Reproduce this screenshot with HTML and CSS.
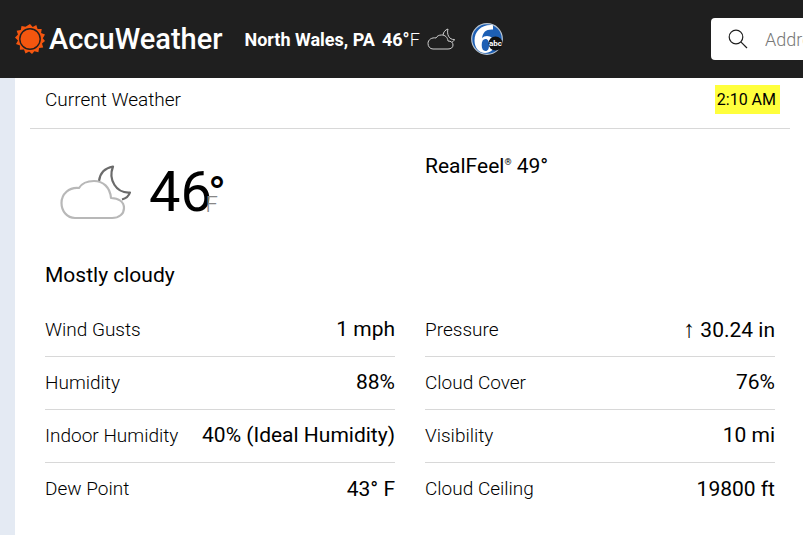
FILE: index.html
```html
<!DOCTYPE html>
<html lang="en">
<head>
    <meta charset="UTF-8">
    <meta name="viewport" content="width=device-width, initial-scale=1.0">
    <title>North Wales, PA Current Weather | AccuWeather</title>
    <link rel="stylesheet" href="styles.css">
</head>
<body>
    <header class="header">
        <a href="#" class="logo">
            <svg width="30" height="30" viewBox="0 0 30 30" aria-hidden="true">
                <path fill="#f4560f" d="M15 0l2.7 3.1L21.3 1l1.3 4 4.1-.1-.6 4.1 3.9 1.6-2.2 3.6L30 17l-3 2.6 1.2 3.9-4.1.6-.7 4.1-4-.9L17 30l-2.9-2.6-3.6 2-1.5-3.9-4.2.2.2-4.2L1 20l2-3.5L0 13.400l3-2.800L1.600 6.800l4.200-.8.7-4.100 4 .9z"/>
                <circle cx="15" cy="15" r="10.200" fill="#f4560f" stroke="#1f1f1f" stroke-width="1.400"/>
            </svg>
            <span>AccuWeather</span>
        </a>
        <a href="#" class="location">
            <span class="city">North Wales, PA</span>
            <span class="temp">46°<span class="unit">F</span></span>
            <svg width="28" height="22" viewBox="0 0 28 22" fill="none" stroke="#d0d0d0" stroke-width="1" aria-hidden="true">
                <path d="M6 21h15c3 0 5-1.500 5-4 0-2.500-2-4-5-4-.5-4-3-6-6.500-6-2.500 0-4.500 1-5.500 3-4-.8-8 1.500-8 5.500 0 3 2 5.500 5 5.500z"/>
                <path d="M16 7c.5-3 2-5 5-6-1.500 5 1 11 6.500 10.500-.5 1.500-1.500 2-2.500 2.500"/>
            </svg>
        </a>
        <a href="#" class="station" aria-label="6abc">
            <svg width="32" height="32" viewBox="0 0 32 32">
                <circle cx="16" cy="16" r="15.300" fill="#1d5fb4" stroke="#b9c5d2" stroke-width="1.200"/>
                <path fill="#fff" d="M22 2.200C11 1 3.500 8 3.500 17.500 3.500 25 8 30 14 30c5.500 0 9.500-3.500 9.500-9 0-5-3.500-8-7.500-8-2.200 0-3.800.8-4.800 2.200C11.500 9.500 15 6 22 6.500z"/>
                <path fill="#1d5fb4" d="M14.500 16c2.500 0 3.500 2.200 3.500 6s-1 6-3.500 6-3.800-2.200-3.800-6 1.300-6 3.800-6z"/>
                <circle cx="24.500" cy="20.500" r="7" fill="#111"/>
                <text x="24.500" y="23" class="abc">abc</text>
            </svg>
        </a>
        <form class="search">
            <svg width="20" height="20" viewBox="0 0 20 20" fill="none" stroke="#1f1f1f" stroke-width="1.200" aria-hidden="true">
                <circle cx="8" cy="8" r="6.800"/>
                <path d="M12.800 12.800L19 19"/>
            </svg>
            <input type="text" placeholder="Address, City or Zip Code" aria-label="Search location">
        </form>
    </header>

    <main class="card">
        <div class="card-header">
            <h1>Current Weather</h1>
            <span class="time">2:10 AM</span>
        </div>
        <div class="card-content">
            <div class="summary">
                <div class="current">
                    <svg width="72" height="56" viewBox="0 0 72 56" fill="none" stroke-width="2.200" stroke-linejoin="round" aria-hidden="true">
                        <path stroke="#6b6b6b" d="M39 16C40 8 45 3 53 1.500c-5 13 3 27 17 26-1 3-4 6-8 7"/>
                        <path stroke="#b8b8b8" d="M15 53h37c7 0 12-4 12-10s-5-10-13-10c-1-11-8-17-17-17-7 0-12 2-15 7C9 22 1.500 29 1.500 38 1.500 46 7 53 15 53z"/>
                    </svg>
                    <div class="big-temp">46<span class="degree">°</span><span class="unit">F</span></div>
                </div>
                <div class="realfeel">RealFeel<sup>®</sup> 49°</div>
            </div>
            <p class="phrase">Mostly cloudy</p>
            <div class="details">
                <dl>
                    <div class="row"><dt>Wind Gusts</dt><dd>1 mph</dd></div>
                    <div class="row"><dt>Humidity</dt><dd>88%</dd></div>
                    <div class="row"><dt>Indoor Humidity</dt><dd>40% (Ideal Humidity)</dd></div>
                    <div class="row"><dt>Dew Point</dt><dd>43° F</dd></div>
                </dl>
                <dl>
                    <div class="row"><dt>Pressure</dt><dd><span class="arrow">↑</span> 30.24 in</dd></div>
                    <div class="row"><dt>Cloud Cover</dt><dd>76%</dd></div>
                    <div class="row"><dt>Visibility</dt><dd>10 mi</dd></div>
                    <div class="row"><dt>Cloud Ceiling</dt><dd>19800 ft</dd></div>
                </dl>
            </div>
        </div>
    </main>
</body>
</html>
```
FILE: styles.css
```css
* {
    box-sizing: border-box;
}
body {
    margin: 0;
    background: #e4eaf3;
    color: #000;
    font-family: Roboto, "Liberation Sans", sans-serif;
    font-size: 18px;
}
a {
    color: inherit;
    text-decoration: none;
}
.header {
    display: flex;
    align-items: center;
    height: 78px;
    padding-left: 15px;
    background: #1f1f1f;
    color: #fff;
}
.logo {
    display: flex;
    align-items: center;
    gap: 4px;
    font-size: 29px;
    font-weight: 500;
}
.location {
    display: flex;
    align-items: center;
    gap: 7px;
    margin-left: 22px;
    font-size: 18px;
    font-weight: 700;
    white-space: nowrap;
}
.location .unit {
    font-weight: 300;
}
.station {
    display: flex;
    margin-left: 16px;
}
.abc {
    fill: #fff;
    font-size: 8px;
    font-weight: 700;
    text-anchor: middle;
}
.search {
    display: flex;
    align-items: center;
    gap: 17px;
    width: 92px;
    height: 42px;
    margin-left: auto;
    padding-left: 17px;
    border-radius: 4px 0 0 4px;
    background: #fff;
}
.search svg {
    flex-shrink: 0;
}
.search input {
    flex: 1;
    min-width: 0;
    padding: 0;
    border: none;
    outline: none;
    background: none;
    font: 300 18px Roboto, "Liberation Sans", sans-serif;
}
.search input::placeholder {
    color: #777;
}
.card {
    margin-left: 15px;
    padding: 0 13px 20px 15px;
    background: #fff;
}
.card-header {
    display: flex;
    align-items: center;
    justify-content: space-between;
    height: 51px;
    padding: 0 10px 8px 15px;
    border-bottom: 1px solid #d8d8d8;
}
.card-header h1 {
    margin: 0;
    font-size: 19px;
    font-weight: 300;
}
.time {
    padding: 0 4px 0 2px;
    background: #ffff3c;
    font-size: 16px;
    line-height: 29px;
}
.card-content {
    padding: 0 15px;
}
.summary,
.details {
    display: grid;
    grid-template-columns: 1fr 1fr;
    column-gap: 30px;
}
.summary {
    padding-top: 24px;
}
.current {
    display: flex;
    align-items: center;
    gap: 17px;
    height: 80px;
    padding-left: 15px;
}
.big-temp {
    position: relative;
    font-size: 56px;
    line-height: 64px;
}
.big-temp .degree {
    margin-left: -4px;
    font-size: 48px;
}
.big-temp .unit {
    position: absolute;
    right: 8px;
    bottom: 10px;
    color: #878787;
    font-size: 22px;
    font-weight: 300;
    line-height: 24px;
}
.realfeel {
    font-size: 21px;
    line-height: 26px;
}
.realfeel sup {
    font-size: 9px;
    line-height: 0;
}
.phrase {
    margin: 28px 0 15px;
    font-size: 21px;
    line-height: 28px;
}
.details dl {
    margin: 0;
}
.row {
    display: flex;
    align-items: center;
    justify-content: space-between;
    height: 53px;
    padding-bottom: 2px;
    border-bottom: 1px solid #d8d8d8;
}
.row:last-child {
    border-bottom: none;
}
.row dt {
    font-size: 19px;
    font-weight: 300;
}
.row dd {
    margin: 0;
    font-size: 21px;
}
.arrow {
    font-family: "Liberation Serif", serif;
    font-size: 24px;
    line-height: 24px;
}
```
